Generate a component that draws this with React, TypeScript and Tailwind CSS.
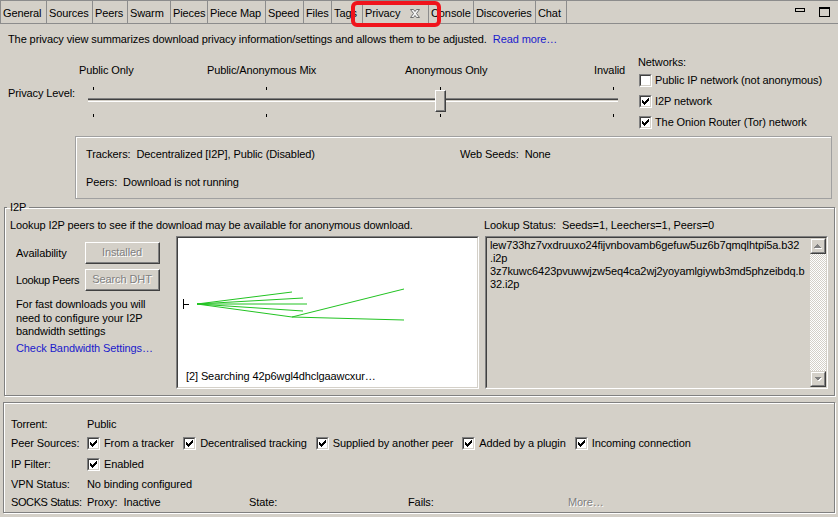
import React from 'react'

const tabs: [string, number][] = [
  ['General', 46],
  ['Sources', 46],
  ['Peers', 35],
  ['Swarm', 43],
  ['Pieces', 37],
  ['Piece Map', 58],
  ['Speed', 38],
  ['Files', 28],
  ['Tags', 31],
  ['Privacy', 66],
  ['Console', 45],
  ['Discoveries', 62],
  ['Chat', 31],
]

// classic 3px-tall check, one rect per column
const checkCols = [2, 3, 4, 3, 2, 1, 0]

function Check({ checked }: { checked?: boolean }) {
  return (
    <span className="inline-flex w-[13px] h-[13px] shrink-0 border border-t-[#808080] border-l-[#808080] border-b-white border-r-white">
      <span className="flex-1 bg-white border border-t-[#404040] border-l-[#404040] border-b-[#d4d0c8] border-r-[#d4d0c8] flex items-center justify-center">
        {checked && (
          <svg width="7" height="7" viewBox="0 0 7 7" shapeRendering="crispEdges">
            {checkCols.map((y, x) => (
              <rect key={x} x={x} y={y} width="1" height="3" fill="#000" />
            ))}
          </svg>
        )}
      </span>
    </span>
  )
}

function CheckItem({ label, checked }: { label: string; checked?: boolean }) {
  return (
    <div className="flex items-center">
      <Check checked={checked} />
      <span className="ml-[4px]">{label}</span>
    </div>
  )
}

function Btn({ children }: { children: React.ReactNode }) {
  return (
    <div className="w-[75px] h-[22px] flex border border-t-white border-l-white border-b-[#404040] border-r-[#404040]">
      <div className="flex-1 flex items-center justify-center border-b border-r border-[#808080] text-[#808080] [text-shadow:1px_1px_0_#ffffff]">
        {children}
      </div>
    </div>
  )
}

function ScrollBtn({ down }: { down?: boolean }) {
  return (
    <div className="w-[16px] h-[16px] bg-[#d4d0c8] border border-t-[#d4d0c8] border-l-[#d4d0c8] border-b-[#404040] border-r-[#404040] flex">
      <div className="flex-1 flex items-center justify-center border border-t-white border-l-white border-b-[#808080] border-r-[#808080]">
        <svg width="8" height="5" viewBox="0 0 8 5" shapeRendering="crispEdges">
          {down ? (
            <>
              <path d="M1 1h7L4.5 4.5z" fill="#ffffff" />
              <path d="M0 0h7L3.5 3.5z" fill="#808080" />
            </>
          ) : (
            <>
              <path d="M1 4.5h7L4.5 1z" fill="#ffffff" />
              <path d="M0 3.5h7L3.5 0z" fill="#808080" />
            </>
          )}
        </svg>
      </div>
    </div>
  )
}

function SwarmGraph() {
  const o = [19, 66]
  const ends = [
    [114, 54],
    [125, 60],
    [129, 66],
    [125, 73],
    [114, 79],
  ]
  return (
    <svg className="absolute inset-0" width="299" height="149">
      <path d="M5.5 61v10M5.5 66.5h5" stroke="#000" strokeWidth="1" shapeRendering="crispEdges" />
      {ends.map(([x, y], i) => (
        <line key={i} x1={o[0]} y1={o[1]} x2={x} y2={y} stroke="#22c322" strokeWidth="1" />
      ))}
      <line x1={114} y1={79} x2={226} y2={51} stroke="#22c322" strokeWidth="1" />
      <line x1={114} y1={79} x2={226} y2={82} stroke="#22c322" strokeWidth="1" />
    </svg>
  )
}

export default function App() {
  return (
    <div className="relative w-[838px] h-[517px] overflow-hidden bg-[#d4d0c8] text-black text-[11px] leading-[13px] tracking-[-0.1px] font-['Liberation_Sans',Arial,sans-serif] flex flex-col">
      {/* Tab strip */}
      <div className="h-[24px] shrink-0 flex border-y border-[#8c8c8c]">
        <div className="flex border-l border-[#8c8c8c]">
          {tabs.map(([name, w]) => (
            <div
              key={name}
              style={{ width: w }}
              className="h-full border-r border-[#8c8c8c] flex items-center pl-[2px] pt-[3px] whitespace-nowrap"
            >
              {name}
              {name === 'Privacy' && (
                <svg className="ml-[9px] -mt-[1px]" width="12" height="11" viewBox="0 0 12 11">
                  <path
                    d="M1.5 1.5h3l1.5 2 1.5-2h3l-3 4 3 4h-3L6 7.5l-1.5 2h-3l3-4z"
                    fill="#f4f4f4"
                    stroke="#6e6e6e"
                    strokeWidth="1"
                  />
                </svg>
              )}
            </div>
          ))}
        </div>
        <div className="ml-auto flex items-start pt-[6px] pr-[8px] gap-[14px]">
          <div className="w-[10px] h-[4px] border border-black mt-[1px]" />
          <div className="w-[11px] h-[10px] border border-black border-t-2" />
        </div>
      </div>

      {/* highlight round the selected tab */}
      <div className="absolute left-[351px] top-[1px] w-[90px] h-[26px] border-[4px] border-[#f0141c] rounded-[6px]" />

      <div className="pl-[8px] mt-[9px] whitespace-nowrap">
        The privacy view summarizes download privacy information/settings and allows them to be adjusted.
        <span className="ml-[6px] text-[#1a1acc]">Read more…</span>
      </div>

      {/* Privacy level + networks */}
      <div className="flex">
        <div className="w-[636px] pt-[18px]">
          <div className="flex pl-[79px] whitespace-nowrap">
            <div className="w-[128px]">Public Only</div>
            <div className="w-[198px]">Public/Anonymous Mix</div>
            <div className="w-[189px]">Anonymous Only</div>
            <div>Invalid</div>
          </div>
          <div className="flex -mt-[1px]">
            <div className="w-[84px] pl-[8px] pt-[11px] whitespace-nowrap">Privacy Level:</div>
            <div className="relative w-[540px] h-[42px]">
              {[9, 182, 356, 529].map((x) => (
                <React.Fragment key={x}>
                  <div className="absolute top-[11px] w-[1px] h-[3px] bg-black" style={{ left: x }} />
                  <div className="absolute top-[38px] w-[1px] h-[3px] bg-black" style={{ left: x }} />
                </React.Fragment>
              ))}
              <div className="absolute left-[4px] top-[22px] w-[530px]">
                <div className="h-[1px] bg-[#808080]" />
                <div className="h-[1px] bg-[#404040]" />
                <div className="h-[1px] bg-[#d4d0c8]" />
                <div className="h-[1px] bg-white" />
              </div>
              <div className="absolute left-[351px] top-[14px] w-[11px] h-[22px] bg-[#d4d0c8] border border-t-white border-l-white border-b-[#404040] border-r-[#404040]">
                <div className="h-full border-b border-r border-[#808080]" />
              </div>
            </div>
          </div>
        </div>
        <div className="ml-[2px] pt-[10px] whitespace-nowrap">
          <div>Networks:</div>
          <div className="mt-[1px]">
            {[
              ['Public IP network (not anonymous)', false],
              ['I2P network', true],
              ['The Onion Router (Tor) network', true],
            ].map(([label, checked]) => (
              <div key={label as string} className="h-[21px] flex items-center pl-[1px]">
                <Check checked={checked as boolean} />
                <span className="ml-[3px]">{label as string}</span>
              </div>
            ))}
          </div>
        </div>
      </div>

      {/* Trackers / peers summary */}
      <div className="mt-[3px] ml-[75px] w-[757px] h-[63px] border border-[#a0a0a0] shadow-[inset_1px_1px_0_#ffffff] pl-[10px] pt-[11px] whitespace-pre">
        <div className="flex">
          <div className="w-[374px]">Trackers:  Decentralized [I2P], Public (Disabled)</div>
          <div>Web Seeds:  None</div>
        </div>
        <div className="mt-[15px]">Peers:  Download is not running</div>
      </div>

      {/* I2P group */}
      <fieldset className="mt-[2px] ml-[4px] w-[831px] border border-[#808080] shadow-[inset_1px_1px_0_#ffffff,1px_1px_0_#ffffff] pl-[2px] pb-[6px]">
        <legend className="px-[3px] leading-[13px]">I2P</legend>
        <div className="flex pl-[3px] pt-[5px]">
          <div className="w-[474px]">
            <div className="whitespace-nowrap">
              Lookup I2P peers to see if the download may be available for anonymous download.
            </div>
            <div className="flex mt-[4px]">
              <div className="w-[166px] pl-[6px]">
                <div className="flex items-center mt-[6px]">
                  <div className="w-[69px] whitespace-nowrap">Availability</div>
                  <Btn>Installed</Btn>
                </div>
                <div className="flex items-center mt-[5px]">
                  <div className="w-[69px] whitespace-nowrap tracking-[-0.4px]">Lookup Peers</div>
                  <Btn>Search DHT</Btn>
                </div>
                <div className="mt-[7px] leading-[13.5px]">
                  For fast downloads you will
                  <br />
                  need to configure your I2P
                  <br />
                  bandwidth settings
                </div>
                <div className="mt-[3px] text-[#1a1acc] whitespace-nowrap">Check Bandwidth Settings…</div>
              </div>
              <div className="w-[303px] h-[153px] border border-t-[#808080] border-l-[#808080] border-b-white border-r-white">
                <div className="relative h-full bg-white border border-t-[#404040] border-l-[#404040] border-b-[#d4d0c8] border-r-[#d4d0c8] flex flex-col justify-end pl-[8px] pb-[4px]">
                  <SwarmGraph />
                  <div className="relative whitespace-nowrap">[2] Searching 42p6wgl4dhclgaawcxur…</div>
                </div>
              </div>
            </div>
          </div>
          <div>
            <div className="whitespace-pre">Lookup Status:  Seeds=1, Leechers=1, Peers=0</div>
            <div className="mt-[4px] ml-[1px] w-[343px] h-[153px] border border-t-[#808080] border-l-[#808080] border-b-white border-r-white">
              <div className="h-full flex border border-t-[#404040] border-l-[#404040] border-b-[#d4d0c8] border-r-[#d4d0c8]">
                <div className="flex-1 pl-[3px] pt-[1px] whitespace-nowrap">
                  <div>lew733hz7vxdruuxo24fijvnbovamb6gefuw5uz6b7qmqlhtpi5a.b32</div>
                  <div>.i2p</div>
                  <div>3z7kuwc6423pvuwwjzw5eq4ca2wj2yoyamlgiywb3md5phzeibdq.b</div>
                  <div>32.i2p</div>
                </div>
                <div className="w-[16px] flex flex-col">
                  <ScrollBtn />
                  <div className="flex-1 bg-[repeating-conic-gradient(#ffffff_0_25%,#d4d0c8_0_50%)] bg-size-[2px_2px]" />
                  <ScrollBtn down />
                </div>
              </div>
            </div>
          </div>
        </div>
      </fieldset>

      {/* Torrent status */}
      <div className="mt-[6px] ml-[3px] w-[832px] h-[111px] border border-[#808080] shadow-[inset_1px_1px_0_#ffffff,1px_1px_0_#ffffff] pl-[7px] pt-[11px] whitespace-nowrap">
        <div className="h-[20px] flex items-center">
          <div className="w-[76px]">Torrent:</div>
          <div>Public</div>
        </div>
        <div className="h-[19px] flex items-center">
          <div className="w-[76px]">Peer Sources:</div>
          <div className="flex gap-[9px]">
            <CheckItem label="From a tracker" checked />
            <CheckItem label="Decentralised tracking" checked />
            <CheckItem label="Supplied by another peer" checked />
            <CheckItem label="Added by a plugin" checked />
            <CheckItem label="Incoming connection" checked />
          </div>
        </div>
        <div className="h-[22px] flex items-center">
          <div className="w-[76px]">IP Filter:</div>
          <CheckItem label="Enabled" checked />
        </div>
        <div className="h-[18px] flex items-center">
          <div className="w-[76px]">VPN Status:</div>
          <div>No binding configured</div>
        </div>
        <div className="h-[18px] flex items-center">
          <div className="w-[76px] tracking-[-0.4px]">SOCKS Status:</div>
          <div className="w-[162px] whitespace-pre">Proxy:  Inactive</div>
          <div className="w-[159px]">State:</div>
          <div className="w-[160px]">Fails:</div>
          <div className="text-[#808080] [text-shadow:1px_1px_0_#ffffff]">More…</div>
        </div>
      </div>
    </div>
  )
}
